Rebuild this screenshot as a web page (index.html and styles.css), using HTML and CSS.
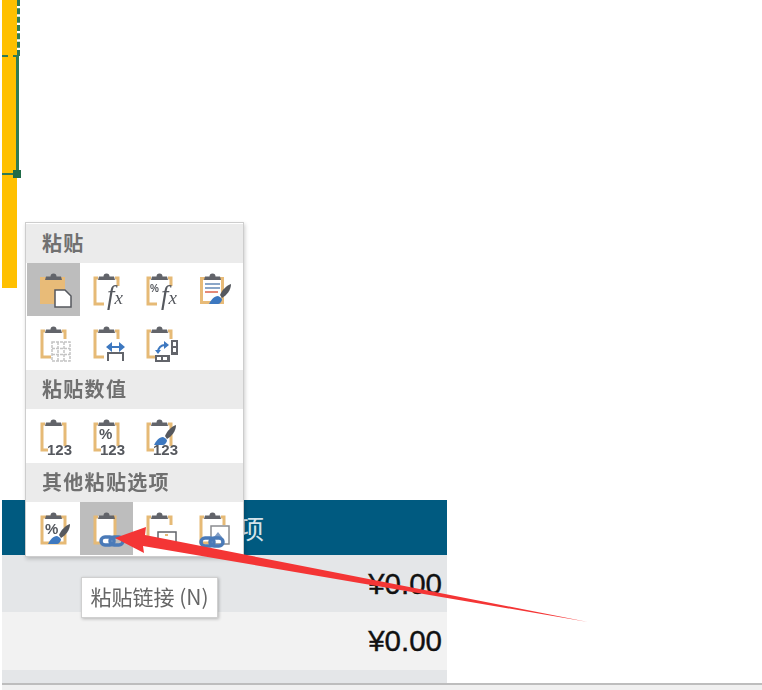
FILE: index.html
```html
<!DOCTYPE html>
<html lang="zh-CN">
<head>
    <meta charset="UTF-8">
    <title>粘贴链接</title>
    <link rel="stylesheet" href="styles.css">
</head>
<body>
    <svg class="defs" width="0" height="0">
        <defs>
            <symbol id="clip" viewBox="0 0 53 53">
                <path d="M18 17l1-3.500h4.500a3 3 0 0 1 6 0h4.500l1 3.500z" fill="#62646a"/>
            </symbol>
            <symbol id="board" viewBox="0 0 53 53">
                <path d="M18 15h-3v26h9M35 15h3v8" fill="none" stroke="#e6ba76" stroke-width="3"/>
                <use href="#clip" width="53" height="53"/>
            </symbol>
            <symbol id="board-tall" viewBox="0 0 53 53">
                <path d="M18 15h-3v26h6M35 15h3v22" fill="none" stroke="#e6ba76" stroke-width="3"/>
                <use href="#clip" width="53" height="53"/>
            </symbol>
            <symbol id="brush" viewBox="0 0 53 53">
                <path d="M45 21c0 6-4 11-9 14l-2-3c2-5 6-9 11-11z" fill="#55585e"/>
                <path d="M23 41c2-4 5-8 9-8 3 1 4 3 4 4-1 2-2 4-4 4z" fill="#3d78c0"/>
            </symbol>
            <symbol id="link" viewBox="0 0 53 53">
                <g fill="none" stroke="#4a7ab8" stroke-width="3.500">
                    <rect x="24" y="36" width="13" height="8" rx="4"/>
                    <rect x="33" y="36" width="13" height="8" rx="4"/>
                </g>
            </symbol>
        </defs>
    </svg>

    <div class="sheet">
        <div class="yellow-column"></div>

        <div class="money-table">
            <div class="table-head">项</div>
            <div class="table-row row-dark">¥0.00</div>
            <div class="table-row row-light">¥0.00</div>
            <div class="table-end"></div>
        </div>
        <div class="bottom-bar"></div>

        <!-- copied range marker -->
        <div class="marching-ants"></div>
        <div class="selection">
            <div class="selection-handle"></div>
        </div>

        <div class="paste-menu">
            <div class="menu-title">粘贴</div>
            <div class="icon-grid">
                <div class="icon-cell active">
                    <svg class="icon" viewBox="0 0 53 53">
                        <rect x="13" y="14" width="25" height="27" fill="#e8bb78"/>
                        <use href="#clip" width="53" height="53"/>
                        <path d="M28 27h10l6 6v11h-16z" fill="#fff" stroke="#55585e" stroke-width="1.500"/>
                    </svg>
                </div>
                <div class="icon-cell">
                    <svg class="icon" viewBox="0 0 53 53">
                        <use href="#board" width="53" height="53"/>
                        <text class="fx-text" x="27" y="41">f<tspan class="fx-small">x</tspan></text>
                    </svg>
                </div>
                <div class="icon-cell">
                    <svg class="icon" viewBox="0 0 53 53">
                        <use href="#board" width="53" height="53"/>
                        <text class="pct-text" x="17" y="29">%</text>
                        <text class="fx-text" x="28" y="41">f<tspan class="fx-small">x</tspan></text>
                    </svg>
                </div>
                <div class="icon-cell">
                    <svg class="icon" viewBox="0 0 53 53">
                        <rect x="14" y="14" width="24" height="27" fill="#e8bb78"/>
                        <rect x="17" y="17" width="18" height="21" fill="#fff"/>
                        <use href="#clip" width="53" height="53"/>
                        <path d="M19 21h15M19 25h15" stroke="#8aa6c8" stroke-width="2"/>
                        <path d="M19 29h13" stroke="#e58a78" stroke-width="2"/>
                        <use href="#brush" width="53" height="53"/>
                    </svg>
                </div>
                <div class="icon-cell">
                    <svg class="icon" viewBox="0 0 53 53">
                        <use href="#board" width="53" height="53"/>
                        <path d="M25 26h18v19h-18zM31 26v19M37 26v19M25 32.500h18M25 38.500h18" fill="#fff" stroke="#c4c4c4" stroke-width="1.500" stroke-dasharray="3 1"/>
                    </svg>
                </div>
                <div class="icon-cell">
                    <svg class="icon" viewBox="0 0 53 53">
                        <use href="#board" width="53" height="53"/>
                        <path d="M26 31l6-5v10zM45 31l-6-5v10z" fill="#3d78c0"/>
                        <path d="M31 31h9" stroke="#3d78c0" stroke-width="2"/>
                        <path d="M28 45v-8h15v8" fill="none" stroke="#62646a" stroke-width="2"/>
                    </svg>
                </div>
                <div class="icon-cell">
                    <svg class="icon" viewBox="0 0 53 53">
                        <use href="#board" width="53" height="53"/>
                        <path d="M25 36c0-4 3-7 7-7" fill="none" stroke="#3d78c0" stroke-width="2"/>
                        <path d="M31 25l5 4-5 4zM22 34h6l-3 4z" fill="#3d78c0"/>
                        <rect x="38" y="24" width="7" height="15" fill="#62646a"/>
                        <rect x="40" y="26" width="3" height="4" fill="#fff"/>
                        <rect x="40" y="32" width="3" height="4" fill="#fff"/>
                        <rect x="22" y="39" width="15" height="7" fill="#62646a"/>
                        <rect x="24" y="41" width="4" height="3" fill="#fff"/>
                        <rect x="30" y="41" width="4" height="3" fill="#fff"/>
                    </svg>
                </div>
                <div class="icon-cell"></div>
            </div>

            <div class="menu-title">粘贴数值</div>
            <div class="icon-grid">
                <div class="icon-cell">
                    <svg class="icon" viewBox="0 0 53 53">
                        <use href="#board-tall" width="53" height="53"/>
                        <text class="num-text" x="20" y="46">123</text>
                    </svg>
                </div>
                <div class="icon-cell">
                    <svg class="icon" viewBox="0 0 53 53">
                        <use href="#board-tall" width="53" height="53"/>
                        <text class="pct-big" x="19" y="30">%</text>
                        <text class="num-text" x="20" y="46">123</text>
                    </svg>
                </div>
                <div class="icon-cell">
                    <svg class="icon" viewBox="0 0 53 53">
                        <use href="#board-tall" width="53" height="53"/>
                        <g transform="translate(-2 -5)"><use href="#brush" width="53" height="53"/></g>
                        <text class="num-text" x="20" y="46">123</text>
                    </svg>
                </div>
            </div>

            <div class="menu-title">其他粘贴选项</div>
            <div class="icon-grid">
                <div class="icon-cell">
                    <svg class="icon" viewBox="0 0 53 53">
                        <rect x="15" y="15" width="23" height="26" fill="#fff" stroke="#e6ba76" stroke-width="3"/>
                        <use href="#clip" width="53" height="53"/>
                        <text class="pct-big" x="18" y="32">%</text>
                        <g transform="translate(-2 1)"><use href="#brush" width="53" height="53"/></g>
                    </svg>
                </div>
                <div class="icon-cell active">
                    <svg class="icon" viewBox="0 0 53 53">
                        <rect x="14" y="14" width="21" height="28" fill="#fff"/>
                        <path d="M18 15h-3v26h6M32 15h3v20" fill="none" stroke="#e6ba76" stroke-width="3"/>
                        <use href="#clip" width="53" height="53"/>
                        <g transform="translate(-3 -1)"><use href="#link" width="53" height="53"/></g>
                    </svg>
                </div>
                <div class="icon-cell">
                    <svg class="icon" viewBox="0 0 53 53">
                        <use href="#board" width="53" height="53"/>
                        <rect x="25" y="30" width="18" height="14" fill="#fff" stroke="#62646a" stroke-width="1.500"/>
                        <rect x="32" y="32" width="3" height="2" fill="#e6ba76"/>
                    </svg>
                </div>
                <div class="icon-cell">
                    <svg class="icon" viewBox="0 0 53 53">
                        <use href="#board" width="53" height="53"/>
                        <rect x="25" y="24" width="18" height="18" fill="#fff" stroke="#8a8c90" stroke-width="1.500"/>
                        <path d="M28 35l4-5 4 5z" fill="#7f9cc4"/>
                        <g transform="translate(-9 0)"><use href="#link" width="53" height="53"/></g>
                    </svg>
                </div>
            </div>
        </div>

        <div class="paste-tip">粘贴链接 (N)</div>

        <svg class="red-arrow" viewBox="0 0 762 690">
            <path d="M115 538L146 527L145 535L588 622L143 546L144 553Z" fill="#f43535"/>
        </svg>
    </div>
</body>
</html>
```

FILE: styles.css
```css
* {
    box-sizing: border-box;
}
body {
    margin: 0;
    height: 690px;
    background-color: white;
    overflow: hidden;
    font-family: "Noto Sans CJK SC", "Noto Sans", sans-serif;
}
.defs {
    position: absolute;
}
.sheet {
    position: relative;
    height: 690px;
    filter: blur(0.7px);
}
.yellow-column {
    width: 15px;
    height: 288px;
    margin-left: 2px;
    background-color: #ffc000;
}
.money-table {
    width: 445px;
    margin-top: 212px;
    margin-left: 2px;
}
.table-head {
    height: 55px;
    padding-left: 236px;
    display: flex;
    align-items: center;
    background-color: #005a80;
    color: #d5e3ea;
    font-size: 26px;
}
.table-row {
    display: flex;
    justify-content: flex-end;
    align-items: center;
    padding-right: 5px;
    color: #111;
    font-family: "Liberation Sans", sans-serif;
    font-size: 29.500px;
    -webkit-text-stroke: 0.4px #111;
}
.row-dark {
    height: 57px;
    background-color: #e4e6e8;
}
.row-light {
    height: 58px;
    background-color: #f2f2f2;
}
.table-end {
    height: 13px;
    background-color: #e4e6e8;
}
.bottom-bar {
    height: 7px;
    margin-left: 2px;
    border-top: 2px solid #bdbdbd;
    background-color: #f0f0f0;
}
.marching-ants {
    position: absolute;
    left: 17px;
    top: 0;
    height: 56px;
    border-left: 3px dashed #2f7a55;
}
.selection {
    position: absolute;
    left: 2px;
    top: 55px;
    width: 17px;
    height: 120px;
    border-top: 2px dashed #2f7a55;
    border-bottom: 2px solid #2f7a55;
    border-right: 3px solid #2f7a55;
}
.selection-handle {
    position: absolute;
    right: -5px;
    bottom: -5px;
    width: 8px;
    height: 8px;
    background-color: #1f6b48;
}
.paste-menu {
    position: absolute;
    left: 25px;
    top: 222px;
    width: 219px;
    padding-top: 1px;
    background-color: white;
    border: 1px solid #cdcdcd;
    box-shadow: 1px 2px 4px rgba(0, 0, 0, 0.2);
}
.menu-title {
    height: 39px;
    padding-left: 16px;
    padding-bottom: 3px;
    display: flex;
    align-items: center;
    background-color: #ebebeb;
    color: #707070;
    font-size: 20px;
    font-weight: 700;
    letter-spacing: 1.300px;
}
.icon-grid {
    display: grid;
    grid-template-columns: repeat(4, 53px);
    grid-auto-rows: 53px;
    padding: 0 1px 1px;
}
.icon-cell {
    width: 53px;
    height: 53px;
}
.icon-cell.active {
    background-color: #bdbdbd;
}
.icon {
    display: block;
    width: 53px;
    height: 53px;
}
.fx-text {
    font-family: "Liberation Serif", serif;
    font-style: italic;
    font-size: 27px;
    fill: #55585e;
}
.fx-small {
    font-size: 19px;
}
.pct-text {
    font-family: "Liberation Sans", sans-serif;
    font-weight: bold;
    font-size: 10px;
    fill: #55585e;
}
.pct-big {
    font-family: "Liberation Sans", sans-serif;
    font-weight: bold;
    font-size: 15px;
    fill: #55585e;
}
.num-text {
    font-family: "Liberation Sans", sans-serif;
    font-weight: bold;
    font-size: 15px;
    fill: #55585e;
}
.paste-tip {
    position: absolute;
    left: 81px;
    top: 577px;
    width: 137px;
    height: 41px;
    padding-bottom: 3px;
    display: flex;
    align-items: center;
    justify-content: center;
    background-color: white;
    border: 1px solid #d0d0d0;
    box-shadow: 1px 1px 3px rgba(0, 0, 0, 0.25);
    color: #666;
    font-size: 21px;
    white-space: nowrap;
}
.red-arrow {
    position: absolute;
    left: 0;
    top: 0;
    width: 762px;
    height: 690px;
}
```
